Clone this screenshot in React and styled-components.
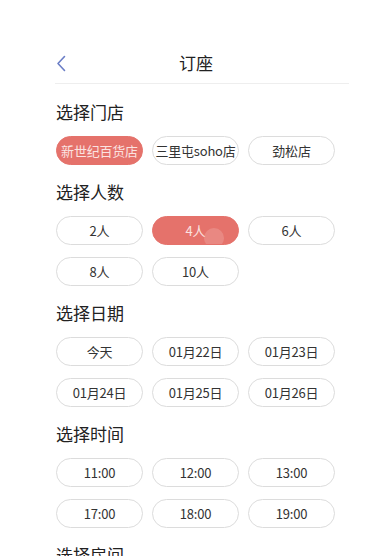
import React from "react";
import styled, { createGlobalStyle } from "styled-components";

const Global = createGlobalStyle`
  html, body { margin: 0; padding: 0; background: #fff; }
  body { font-family: "Noto Sans CJK SC", "Noto Sans", sans-serif; color: #333; }
`;

const Page = styled.div`
  width: 384px;
  height: 556px;
  overflow: hidden;
  box-sizing: border-box;
  padding: 43px 35px 0 55px;
`;

const Header = styled.div`
  position: relative;
  height: 40px;
  display: flex;
  align-items: center;
  justify-content: center;
  border-bottom: 1px solid #eeeeee;
`;

const Back = styled.button`
  position: absolute;
  left: -2px;
  top: 11px;
  width: 16px;
  height: 18px;
  padding: 0;
  border: none;
  background: none;
  display: flex;
  align-items: center;
  justify-content: center;
`;

const Title = styled.div`
  font-size: 17px;
  line-height: 24px;
  color: #222;
  margin-right: 12px;
`;

const Section = styled.div`
  margin-top: ${(p) => (p.first ? 16 : 15)}px;
`;

const Heading = styled.div`
  font-size: 17px;
  line-height: 24px;
  color: #222;
  padding-left: 1px;
  margin-bottom: 12px;
`;

const Grid = styled.div`
  display: grid;
  grid-template-columns: repeat(3, 87px);
  column-gap: 9px;
  row-gap: 12px;
  padding-left: 1px;
`;

const Pill = styled.div`
  position: relative;
  overflow: hidden;
  box-sizing: border-box;
  height: 29px;
  border-radius: 15px;
  display: flex;
  align-items: center;
  justify-content: center;
  font-size: 13px;
  white-space: nowrap;
  letter-spacing: -0.2px;
  background: ${(p) => (p.active ? "#e5726b" : "#fff")};
  color: ${(p) => (p.active ? "#fbe3e1" : "#333")};
  border: 1.5px solid ${(p) => (p.active ? "#e5726b" : "#dcdcdc")};
`;

const Ripple = styled.span`
  position: absolute;
  left: 51px;
  top: 11px;
  width: 20px;
  height: 20px;
  border-radius: 50%;
  background: rgba(255, 255, 255, 0.16);
`;

const sections = [
  { title: "选择门店", items: ["新世纪百货店", "三里屯soho店", "劲松店"], active: 0 },
  { title: "选择人数", items: ["2人", "4人", "6人", "8人", "10人"], active: 1, ripple: true },
  { title: "选择日期", items: ["今天", "01月22日", "01月23日", "01月24日", "01月25日", "01月26日"] },
  { title: "选择时间", items: ["11:00", "12:00", "13:00", "17:00", "18:00", "19:00"] },
  { title: "选择房间", items: [] },
];

export default function App() {
  return (
    <>
      <Global />
      <Page>
        <Header>
          <Back aria-label="返回">
            <svg width="10" height="17" viewBox="0 0 10 17" fill="none">
              <path d="M8.5 1.5 L2 8.5 L8.5 15.5" stroke="#6b7ec6" strokeWidth="1.6" strokeLinecap="round" strokeLinejoin="round" />
            </svg>
          </Back>
          <Title>订座</Title>
        </Header>
        {sections.map((s, i) => (
          <Section key={s.title} first={i === 0}>
            <Heading>{s.title}</Heading>
            {s.items.length > 0 && (
              <Grid>
                {s.items.map((it, j) => (
                  <Pill key={it} active={s.active === j}>
                    {it}
                    {s.ripple && s.active === j && <Ripple />}
                  </Pill>
                ))}
              </Grid>
            )}
          </Section>
        ))}
      </Page>
    </>
  );
}
